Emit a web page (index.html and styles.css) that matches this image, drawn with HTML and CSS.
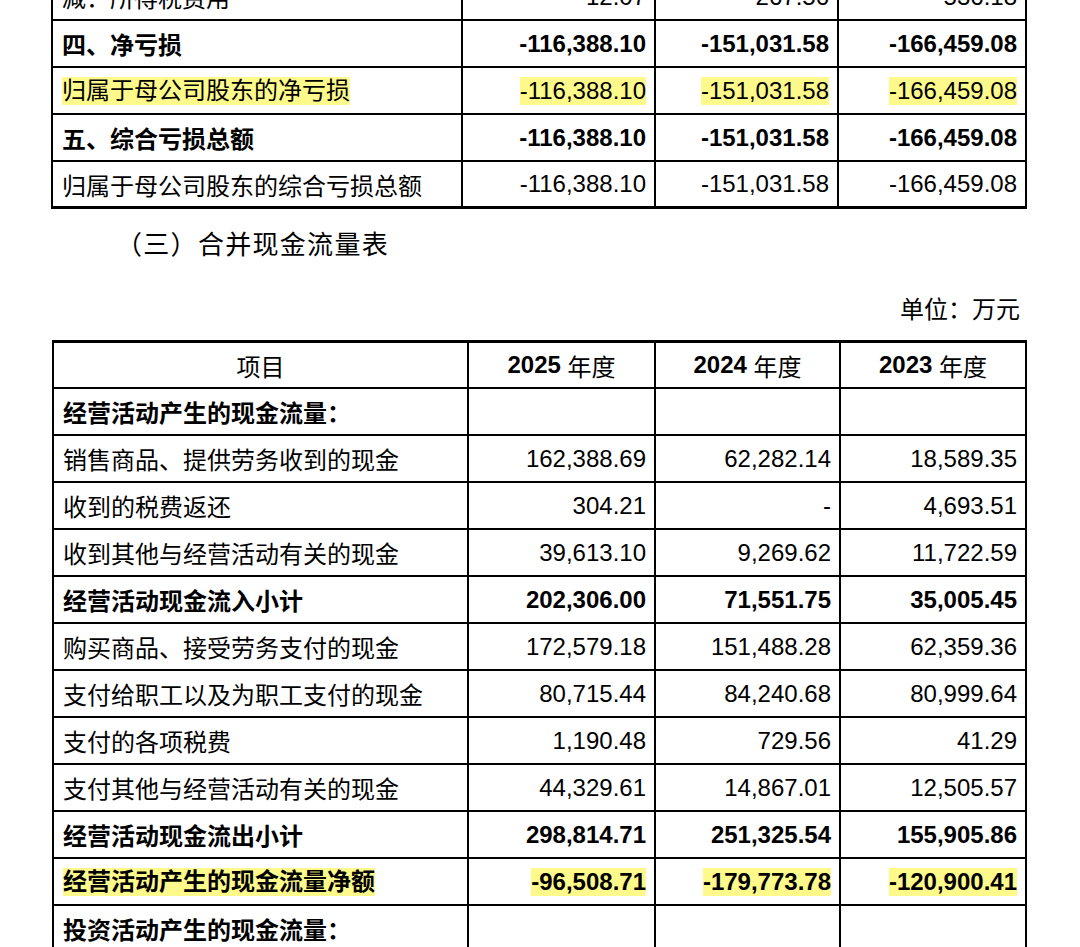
FILE: index.html
```html
<!DOCTYPE html>
<html lang="zh-CN">
<head>
<meta charset="utf-8">
<title>合并现金流量表</title>
<link rel="stylesheet" href="styles.css">
</head>
<body>
<div class="page">
  <div class="tbl t1">
    <div class="row">
      <div class="c lab">减：所得税费用</div>
      <div class="c num">12.07</div>
      <div class="c num">267.56</div>
      <div class="c num">536.18</div>
    </div>
    <div class="row b">
      <div class="c lab">四、净亏损</div>
      <div class="c num">-116,388.10</div>
      <div class="c num">-151,031.58</div>
      <div class="c num">-166,459.08</div>
    </div>
    <div class="row">
      <div class="c lab"><span class="hl">归属于母公司股东的净亏损</span></div>
      <div class="c num"><span class="hl">-116,388.10</span></div>
      <div class="c num"><span class="hl">-151,031.58</span></div>
      <div class="c num"><span class="hl">-166,459.08</span></div>
    </div>
    <div class="row b">
      <div class="c lab">五、综合亏损总额</div>
      <div class="c num">-116,388.10</div>
      <div class="c num">-151,031.58</div>
      <div class="c num">-166,459.08</div>
    </div>
    <div class="row last">
      <div class="c lab">归属于母公司股东的综合亏损总额</div>
      <div class="c num">-116,388.10</div>
      <div class="c num">-151,031.58</div>
      <div class="c num">-166,459.08</div>
    </div>
  </div>

  <h2 class="title">（三）合并现金流量表</h2>
  <div class="unit">单位：万元</div>

  <div class="tbl t2">
    <div class="row head">
      <div class="c ctr">项目</div>
      <div class="c ctr"><b>2025</b>&nbsp;年度</div>
      <div class="c ctr"><b>2024</b>&nbsp;年度</div>
      <div class="c ctr"><b>2023</b>&nbsp;年度</div>
    </div>
    <div class="row b">
      <div class="c lab">经营活动产生的现金流量：</div>
      <div class="c num"></div>
      <div class="c num"></div>
      <div class="c num"></div>
    </div>
    <div class="row">
      <div class="c lab">销售商品、提供劳务收到的现金</div>
      <div class="c num">162,388.69</div>
      <div class="c num">62,282.14</div>
      <div class="c num">18,589.35</div>
    </div>
    <div class="row">
      <div class="c lab">收到的税费返还</div>
      <div class="c num">304.21</div>
      <div class="c num">-</div>
      <div class="c num">4,693.51</div>
    </div>
    <div class="row">
      <div class="c lab">收到其他与经营活动有关的现金</div>
      <div class="c num">39,613.10</div>
      <div class="c num">9,269.62</div>
      <div class="c num">11,722.59</div>
    </div>
    <div class="row b">
      <div class="c lab">经营活动现金流入小计</div>
      <div class="c num">202,306.00</div>
      <div class="c num">71,551.75</div>
      <div class="c num">35,005.45</div>
    </div>
    <div class="row">
      <div class="c lab">购买商品、接受劳务支付的现金</div>
      <div class="c num">172,579.18</div>
      <div class="c num">151,488.28</div>
      <div class="c num">62,359.36</div>
    </div>
    <div class="row">
      <div class="c lab">支付给职工以及为职工支付的现金</div>
      <div class="c num">80,715.44</div>
      <div class="c num">84,240.68</div>
      <div class="c num">80,999.64</div>
    </div>
    <div class="row">
      <div class="c lab">支付的各项税费</div>
      <div class="c num">1,190.48</div>
      <div class="c num">729.56</div>
      <div class="c num">41.29</div>
    </div>
    <div class="row">
      <div class="c lab">支付其他与经营活动有关的现金</div>
      <div class="c num">44,329.61</div>
      <div class="c num">14,867.01</div>
      <div class="c num">12,505.57</div>
    </div>
    <div class="row b">
      <div class="c lab">经营活动现金流出小计</div>
      <div class="c num">298,814.71</div>
      <div class="c num">251,325.54</div>
      <div class="c num">155,905.86</div>
    </div>
    <div class="row b">
      <div class="c lab"><span class="hl">经营活动产生的现金流量净额</span></div>
      <div class="c num"><span class="hl">-96,508.71</span></div>
      <div class="c num"><span class="hl">-179,773.78</span></div>
      <div class="c num"><span class="hl">-120,900.41</span></div>
    </div>
    <div class="row b">
      <div class="c lab">投资活动产生的现金流量：</div>
      <div class="c num"></div>
      <div class="c num"></div>
      <div class="c num"></div>
    </div>
  </div>
</div>
</body>
</html>
```

FILE: styles.css
```css
html, body {
  margin: 0;
  padding: 0;
  background: #ffffff;
}

body {
  font-family: "Liberation Sans", "Noto Sans CJK SC", sans-serif;
  font-size: 24px;
  color: #000000;
  height: 947px;
  overflow: hidden;
}

.page {
  width: 1080px;
}

.tbl {
  display: flex;
  flex-direction: column;
  border-left: 2px solid #000;
  width: max-content;
}

.t1 {
  margin-top: -26px;
  margin-left: 51px;
}

.t2 {
  margin-top: 13px;
  margin-left: 52px;
  border-top: 3px solid #000;
}

.row {
  display: grid;
  height: 47px;
  box-sizing: border-box;
  border-bottom: 2px solid #000;
}

.t1 .row {
  grid-template-columns: 410px 193px 183px 188px;
}

.t2 .row {
  grid-template-columns: 415px 187px 185px 186px;
}

.t1 .row.last {
  border-bottom: 3px solid #000;
}

.t2 .row.head {
  height: 46px;
}

.c {
  box-sizing: border-box;
  border-right: 2px solid #000;
  display: flex;
  align-items: center;
  padding: 0 9px;
  white-space: nowrap;
}

.lab {
  justify-content: flex-start;
}

.num {
  justify-content: flex-end;
  padding-right: 8px;
}

.ctr {
  justify-content: center;
}

.ctr b {
  font-weight: 700;
}

.row.b .c {
  font-weight: 700;
}

.hl {
  display: inline-block;
  background: #fdf98a;
  line-height: 28px;
}

.title {
  margin: 18px 0 0 116px;
  font-size: 26px;
  line-height: 36px;
  font-weight: 400;
  letter-spacing: 1.3px;
}

.unit {
  margin-top: 30px;
  width: 1020px;
  text-align: right;
  font-size: 24px;
  line-height: 34px;
}
```
